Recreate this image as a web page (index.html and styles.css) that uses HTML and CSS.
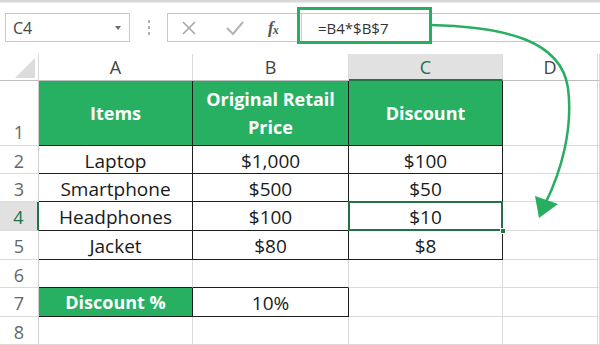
FILE: index.html
```html
<!DOCTYPE html>
<html>
<head>
<meta charset="utf-8">
<link rel="stylesheet" href="styles.css">
</head>
<body>
<div class="app">
  <div class="topline"></div>
  <div class="fbar">
    <div class="namebox"><span class="nb-text">C4</span><span class="caret"></span></div>
    <div class="dots"><i></i><i></i><i></i></div>
    <div class="formula">
      <div class="btns">
        <svg class="ico-x" width="16" height="16" viewBox="0 0 16 16"><path d="M2 2 L14 14 M14 2 L2 14" stroke="#a6a6a6" stroke-width="1.6" fill="none"/></svg>
        <svg class="ico-ok" width="20" height="16" viewBox="0 0 20 16"><path d="M2 8 L8 14 L18 2" stroke="#b3b3b3" stroke-width="2" fill="none"/></svg>
        <span class="fx">f<sub>x</sub></span>
      </div>
      <div class="input">=B4*$B$7</div>
    </div>
  </div>

  <div class="sheet">
    <div class="corner"><span class="tri"></span></div>
    <div class="ch">A</div><div class="ch">B</div><div class="ch chs">C</div><div class="ch">D</div><div class="ch"></div>

    <div class="rh rh1">1</div>
    <div class="c t g hd">Items</div>
    <div class="c t g hd">Original Retail<br>Price</div>
    <div class="c t g hd">Discount</div>
    <div class="c"></div><div class="c"></div>

    <div class="rh">2</div>
    <div class="c t">Laptop</div><div class="c t">$1,000</div><div class="c t">$100</div><div class="c"></div><div class="c"></div>

    <div class="rh">3</div>
    <div class="c t">Smartphone</div><div class="c t">$500</div><div class="c t">$50</div><div class="c"></div><div class="c"></div>

    <div class="rh rhs">4</div>
    <div class="c t">Headphones</div><div class="c t">$100</div><div class="c t sel">$10<span class="handle"></span></div><div class="c"></div><div class="c"></div>

    <div class="rh">5</div>
    <div class="c t">Jacket</div><div class="c t">$80</div><div class="c t">$8</div><div class="c"></div><div class="c"></div>

    <div class="rh">6</div>
    <div class="c bb"></div><div class="c bb"></div><div class="c"></div><div class="c"></div><div class="c"></div>

    <div class="rh">7</div>
    <div class="c t g hd">Discount %</div><div class="c t">10%</div><div class="c"></div><div class="c"></div><div class="c"></div>

    <div class="rh">8</div>
    <div class="c"></div><div class="c"></div><div class="c"></div><div class="c"></div><div class="c"></div>
  </div>

  <div class="hl"></div>
  <svg class="arrow" width="600" height="345" viewBox="0 0 600 345">
    <path d="M431 25 C 505 27, 561 40, 568 88 C 573 128, 562 170, 545 204" stroke="#27ae60" stroke-width="2.5" fill="none"/>
    <path d="M535 196 L558 204 L539 218 Z" fill="#27ae60"/>
  </svg>
</div>
</body>
</html>
```
FILE: styles.css
```css
* { box-sizing: border-box; }
html, body { margin: 0; padding: 0; background: #fff; }
body { width: 600px; height: 345px; overflow: hidden; font-family: "Open Sans", "Lato", sans-serif; }
.app { position: relative; width: 600px; height: 345px; }
.topline { height: 3px; background: linear-gradient(#cfcfcf, #ececec); }

.fbar { display: flex; align-items: stretch; margin-top: 10px; height: 29px; }
.namebox { width: 125px; margin-left: 5px; border: 1px solid #c8c8c8; display: flex; align-items: center; justify-content: space-between; padding: 0 8px 0 7px; }
.nb-text { font-size: 16px; color: #444; }
.caret { width: 0; height: 0; border-left: 3.5px solid transparent; border-right: 3.5px solid transparent; border-top: 4px solid #6a6a6a; }
.dots { width: 37px; display: flex; flex-direction: column; align-items: center; justify-content: center; gap: 3px; }
.dots i { display: block; width: 2px; height: 3px; background: #b0b0b0; }
.formula { flex: 1; display: flex; border: 1px solid #c8c8c8; border-right: none; }
.btns { width: 134px; display: flex; align-items: center; border-right: 1px solid #d0d0d0; padding-left: 13px; }
.ico-x { margin-right: 28px; }
.ico-ok { margin-right: 23px; }
.fx { font-family: "Liberation Serif", serif; font-style: italic; font-size: 17px; color: #555; font-weight: bold; letter-spacing: -1px; }
.fx sub { font-size: 12px; vertical-align: -1px; }
.input { padding-left: 16px; display: flex; align-items: center; font-size: 15px; color: #333; }

.sheet { margin-top: 12px; display: grid; grid-template-columns: 39px 154px 156px 154px 95px 1fr; grid-template-rows: 27px 65px 28px 28px 29px 29px 28px 29px 28px; }
.corner { position: relative; border-right: 1px solid #dadada; border-bottom: 1px solid #bfbfbf; }
.tri { position: absolute; left: 15px; top: 4px; width: 0; height: 0; border-left: 20px solid transparent; border-bottom: 20px solid #dcdcdc; }
.ch { display: flex; align-items: flex-end; justify-content: center; padding-bottom: 1px; font-size: 18px; color: #444; border-right: 1px solid #dadada; border-bottom: 1px solid #bfbfbf; }
.chs { background: #e1e1e1; color: #217346; border-bottom: 2px solid #217346; padding-bottom: 0; }
.rh { display: flex; align-items: center; justify-content: center; font-size: 18px; color: #666; border-right: 1px solid #d0d0d0; border-bottom: 1px solid #dadada; padding-top: 2px; }
.rh1 { align-items: flex-end; padding-bottom: 1px; }
.rhs { background: #e1e1e1; color: #217346; border-right: 2px solid #217346; }
.c { display: flex; align-items: center; justify-content: center; font-size: 19px; color: #1a1a1a; border-right: 1px solid #dadada; border-bottom: 1px solid #dadada; padding-top: 2px; text-align: center; }
.c.t { border-right-color: #1f1f1f; border-bottom-color: #1f1f1f; }
.c.bb { border-bottom-color: #1f1f1f; }
.c.g { background: #27b062; }
.hd { color: #fff; font-weight: bold; font-size: 18px; line-height: 28px; padding-top: 0; }
.sel { position: relative; }
.sel::after { content: ""; position: absolute; left: -1px; top: -1px; right: -1px; bottom: -1px; border: 2px solid #217346; }
.handle { position: absolute; right: -4px; bottom: -4px; width: 6px; height: 6px; background: #217346; border: 1px solid #fff; z-index: 2; }

.hl { position: absolute; left: 297px; top: 7px; width: 135px; height: 37px; border: 3px solid #27ae60; }
.arrow { position: absolute; left: 0; top: 0; pointer-events: none; }
```
